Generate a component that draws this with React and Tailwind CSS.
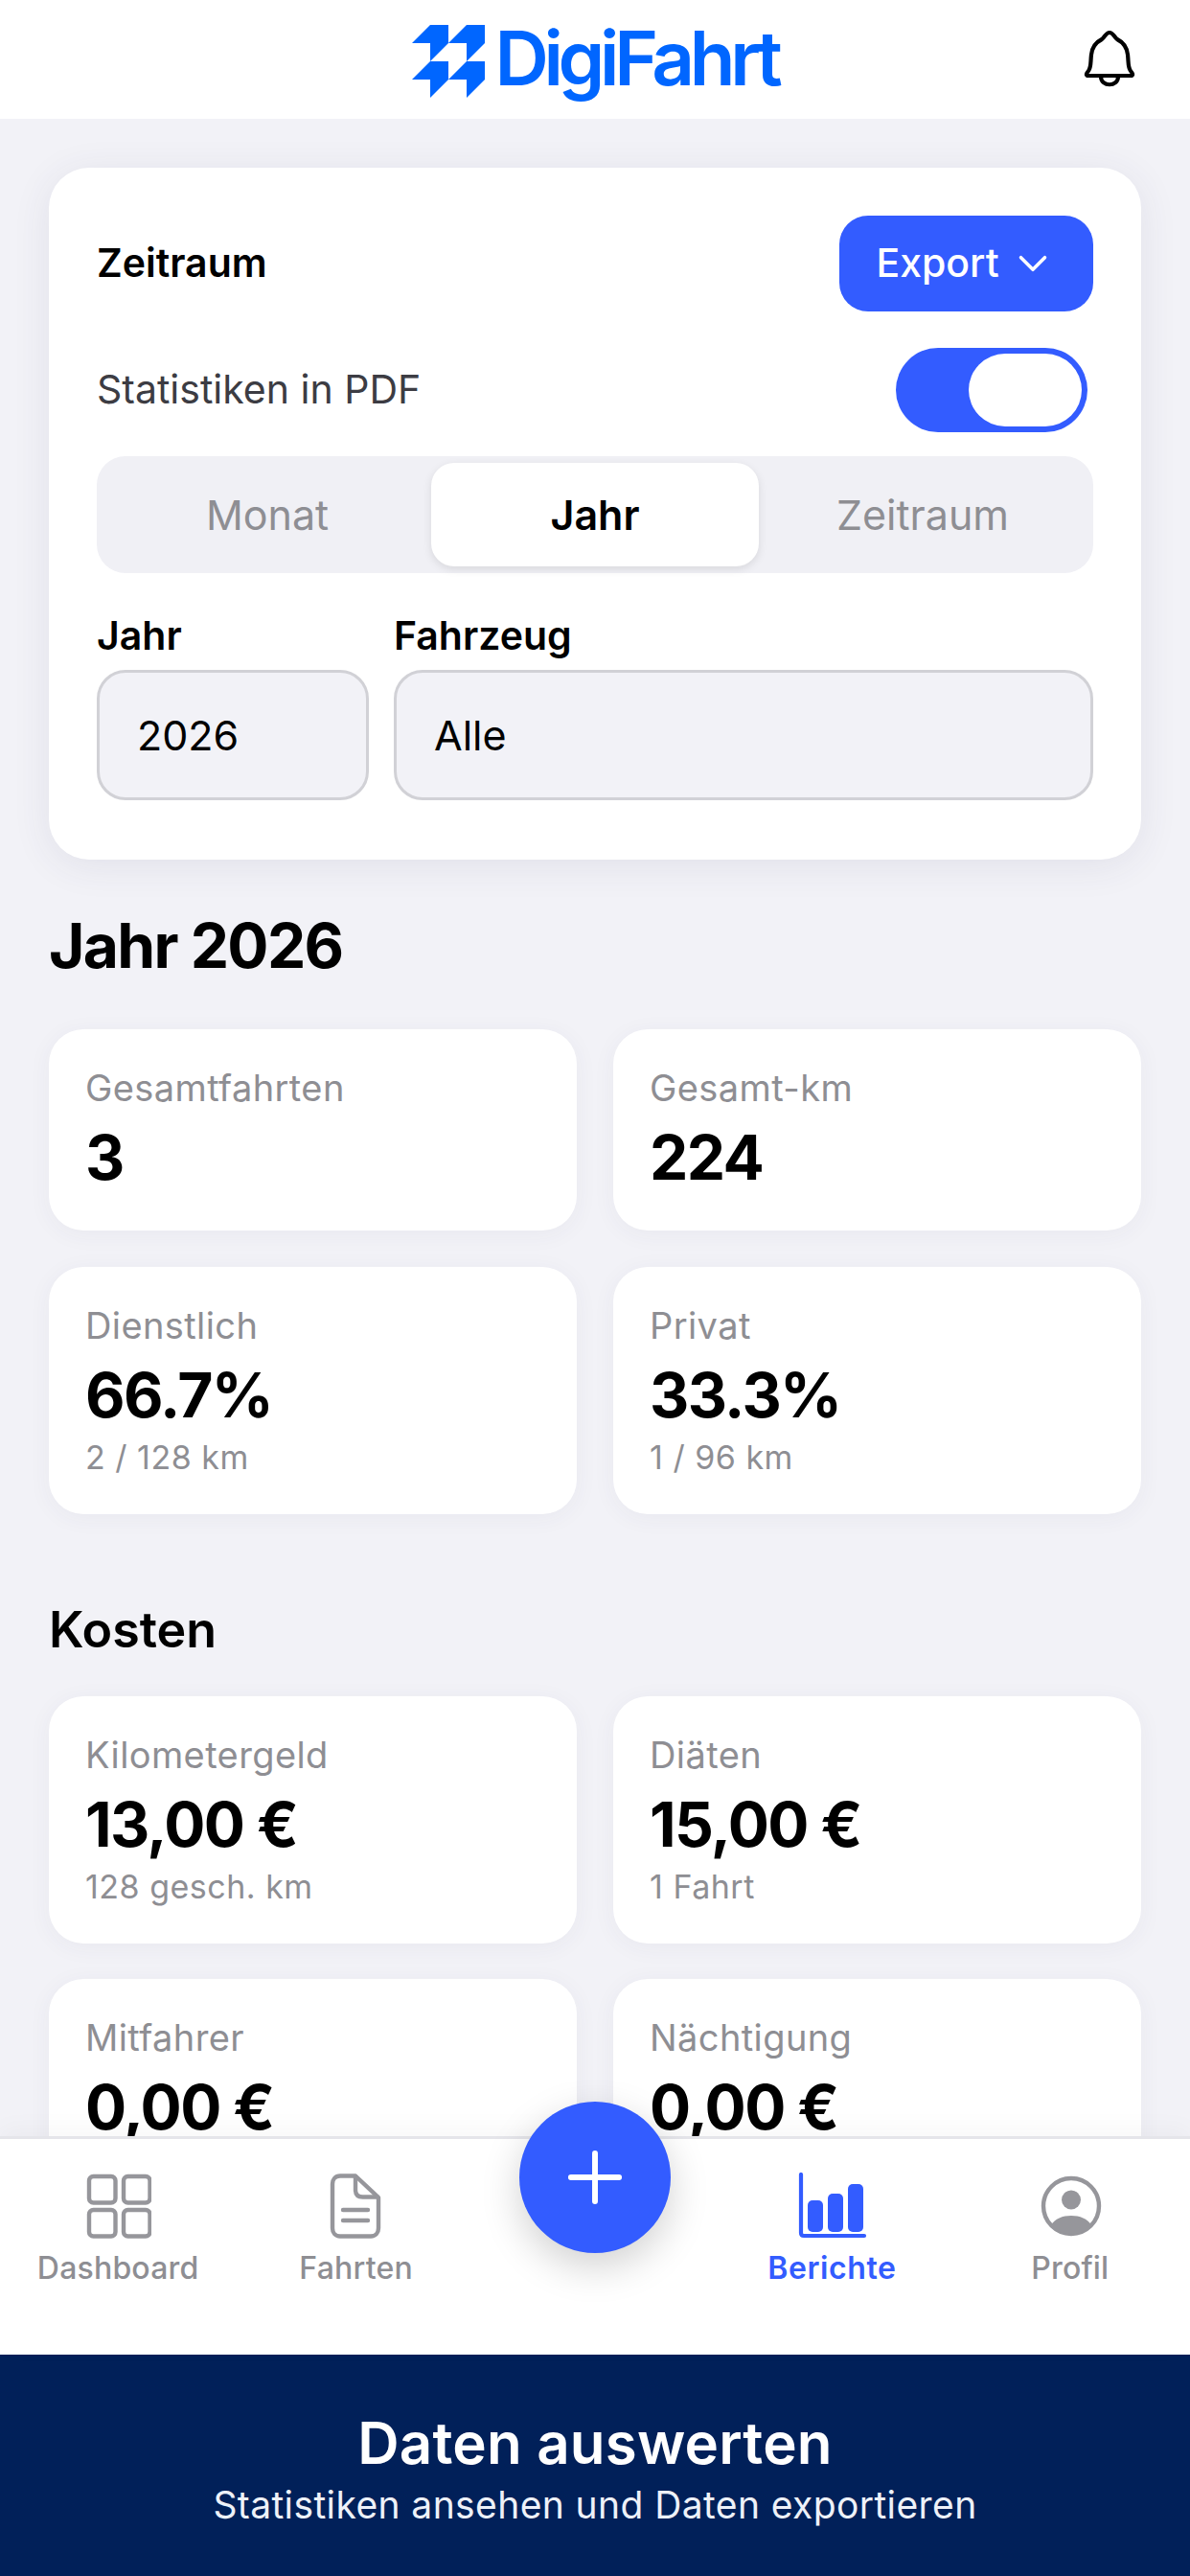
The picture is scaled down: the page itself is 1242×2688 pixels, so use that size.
import { ChevronDown, Plus } from "lucide-react";

function BellIcon() {
  return (
    <svg width="100" height="90" viewBox="0 0 100 90" fill="none" stroke="#000" strokeWidth="4.2" strokeLinejoin="round">
      <path d="M55 14C51 14 50 19 47 21C41 24 37 28 36 37C35 46 36 50 33 54C31 56.5 30 58 32 59H78C80 58 79 56.5 77 54C74 50 75 46 74 37C73 28 69 24 63 21C60 19 59 14 55 14Z" />
      <path d="M46 60C46 71 64 71 64 60" />
    </svg>
  );
}

function LogoMark() {
  return (
    <svg width="76" height="76" viewBox="0 0 76 76" fill="#0066ff">
      <path d="M0 19L19 0H38V19L19 38V19Z" />
      <path d="M38 19L57 0H76V19L57 38V19Z" />
      <path d="M0 57L19 38H38V57L19 76V57Z" />
      <path d="M38 57L57 38H76V57L57 76V57Z" />
    </svg>
  );
}

function DashboardIcon() {
  return (
    <svg width="68" height="68" viewBox="0 0 68 68" fill="none" stroke="#96969b" strokeWidth="4.4">
      <rect x="3" y="3" width="27.5" height="27.5" rx="4.5" />
      <rect x="39" y="3" width="27.5" height="27.5" rx="4.5" />
      <rect x="3" y="38" width="27.5" height="27.5" rx="4.5" />
      <rect x="39" y="38" width="27.5" height="27.5" rx="4.5" />
    </svg>
  );
}

function FileIcon() {
  return (
    <svg width="68" height="68" viewBox="0 0 68 68" fill="none" stroke="#96969b" strokeWidth="4.4" strokeLinecap="round" strokeLinejoin="round">
      <path d="M16 2.5H32L56 25V57C56 62 53 65.5 48 65.5H16C11 65.5 8 62 8 57V11C8 6 11 2.5 16 2.5Z" />
      <path d="M32 3V17C32 22 34.5 24.5 39.5 24.5H55" />
      <path d="M19 38H45" />
      <path d="M19 49H45" />
    </svg>
  );
}

function ChartIcon() {
  return (
    <svg width="72" height="70" viewBox="0 0 72 70" fill="#335cff">
      <path d="M3 2V63C3 65 4 66 6 66H69" fill="none" stroke="#335cff" strokeWidth="4.2" strokeLinecap="round" />
      <rect x="10" y="29" width="16" height="33" rx="5" />
      <rect x="31" y="22" width="16" height="40" rx="5" />
      <rect x="52" y="12" width="16" height="50" rx="5" />
    </svg>
  );
}

function ProfileIcon() {
  return (
    <svg width="68" height="68" viewBox="0 0 68 68" fill="#96969b">
      <circle cx="34" cy="34" r="29" fill="none" stroke="#96969b" strokeWidth="4.4" />
      <circle cx="34" cy="27.5" r="10" />
      <path d="M13 54C17 47 25 44 34 44C43 44 51 47 55 54C50 60 42 63 34 63C26 63 18 60 13 54Z" />
    </svg>
  );
}

function StatCard({ label, value, sub, tall }) {
  return (
    <div className={`bg-white rounded-[36px] px-[38px] pt-[38px] shadow-[0_4px_24px_rgba(60,60,100,0.05)] ${tall ? "h-[258px]" : "h-[210px]"}`}>
      <p className="text-[38px] leading-[46px] text-[#8e8e93] tracking-[0.4px]">{label}</p>
      <p className="text-[64px] leading-[76px] font-bold text-black mt-[12px] tracking-[-1.6px]">{value}</p>
      {sub && <p className="text-[34px] leading-[44px] text-[#8e8e93] mt-[5px] tracking-[0.5px]">{sub}</p>}
    </div>
  );
}

function NavItem({ icon, label, active }) {
  return (
    <div className="flex flex-col items-center">
      <div className="h-[70px] flex items-center justify-center">{icon}</div>
      <span className={`text-[32px] leading-[44px] mt-[8px] ${active ? "text-[#335cff] font-semibold tracking-[0.6px] -ml-[2px]" : "text-[#8e8e93] font-medium tracking-[0.2px] -ml-[2px]"}`}>
        {label}
      </span>
    </div>
  );
}

export default function App() {
  return (
    <div className="w-[1242px] h-[2688px] flex flex-col bg-[#f2f2f7] overflow-hidden font-[family-name:Inter,sans-serif]">
      <header className="h-[124px] shrink-0 bg-white grid grid-cols-[1fr_auto_1fr] items-center z-10">
        <div />
        <div className="flex items-start gap-[10px] pt-[4px]">
          <LogoMark />
          <span className="text-[78px] leading-[70px] font-semibold text-[#0066ff] tracking-[-5.3px]">DigiFahrt</span>
        </div>
        <div className="flex justify-end pr-[39px] pt-[6px]">
          <BellIcon />
        </div>
      </header>

      <main className="flex-1 min-h-0 overflow-hidden px-[51px] pt-[51px]">
        <section className="bg-white rounded-[42px] px-[50px] pt-[50px] pb-[62px] shadow-[0_6px_40px_rgba(60,60,100,0.09)]">
          <div className="flex items-center justify-between h-[100px]">
            <h2 className="text-[41px] font-semibold text-black">Zeitraum</h2>
            <button className="h-[100px] w-[265px] rounded-[30px] bg-[#335cff] text-white text-[41px] font-medium flex items-center justify-center gap-[10px]">
              Export
              <ChevronDown size={50} strokeWidth={1.7} />
            </button>
          </div>

          <div className="flex items-center justify-between mt-[38px] h-[88px]">
            <span className="text-[41px] text-[#3c3c43]">Statistiken in PDF</span>
            <div className="w-[200px] h-[88px] mr-[6px] rounded-full bg-[#335cff] p-[6px] flex justify-end">
              <div className="w-[118px] h-[76px] rounded-full bg-white" />
            </div>
          </div>

          <div className="mt-[25px] h-[122px] rounded-[30px] bg-[#f0f0f5] p-[7px] grid grid-cols-3 text-[43px]">
            <div className="flex items-center justify-center text-[#8e8e93]">Monat</div>
            <div className="flex items-center justify-center rounded-[24px] bg-white font-semibold text-black shadow-[0_3px_10px_rgba(0,0,0,0.1)]">Jahr</div>
            <div className="flex items-center justify-center text-[#8e8e93]">Zeitraum</div>
          </div>

          <div className="mt-[41px] grid grid-cols-[284px_1fr] gap-x-[26px]">
            <label className="text-[41px] leading-[48px] font-semibold text-black mb-[12px]">Jahr</label>
            <label className="text-[41px] leading-[48px] font-semibold text-black mb-[12px]">Fahrzeug</label>
            <div className="h-[136px] rounded-[30px] border-[3px] border-[#d1d1d6] bg-[#f2f2f7] px-[39px] flex items-center text-[43px] text-black">2026</div>
            <div className="h-[136px] rounded-[30px] border-[3px] border-[#d1d1d6] bg-[#f2f2f7] px-[39px] flex items-center text-[43px] text-black">Alle</div>
          </div>
        </section>

        <h2 className="mt-[50px] mb-[47px] h-[80px] leading-[80px] text-[64px] font-bold text-black tracking-[-1.6px]">Jahr 2026</h2>

        <div className="grid grid-cols-2 gap-x-[38px] gap-y-[38px]">
          <StatCard label="Gesamtfahrten" value="3" />
          <StatCard label="Gesamt-km" value="224" />
          <StatCard label="Dienstlich" value="66.7%" sub="2 / 128 km" tall />
          <StatCard label="Privat" value="33.3%" sub="1 / 96 km" tall />
        </div>

        <h2 className="mt-[86px] mb-[34px] h-[70px] leading-[70px] text-[52px] font-semibold text-black">Kosten</h2>

        <div className="grid grid-cols-2 gap-x-[38px] gap-y-[37px]">
          <StatCard label="Kilometergeld" value="13,00 €" sub="128 gesch. km" tall />
          <StatCard label="Diäten" value="15,00 €" sub="1 Fahrt" tall />
          <StatCard label="Mitfahrer" value="0,00 €" tall />
          <StatCard label="Nächtigung" value="0,00 €" tall />
        </div>
      </main>

      <nav className="relative shrink-0 h-[228px] bg-white border-t-[3px] border-[#e5e5ea] grid grid-cols-5 pt-[35px] shadow-[0_-8px_24px_rgba(0,0,0,0.03)]">
        <NavItem icon={<DashboardIcon />} label="Dashboard" />
        <NavItem icon={<FileIcon />} label="Fahrten" />
        <div />
        <NavItem icon={<ChartIcon />} label="Berichte" active />
        <NavItem icon={<ProfileIcon />} label="Profil" />
        <button className="absolute left-[542px] top-[-39px] w-[158px] h-[158px] rounded-full bg-[#335cff] text-white flex items-center justify-center shadow-[0_14px_40px_rgba(0,0,0,0.18)]">
          <Plus size={86} strokeWidth={1.67} />
        </button>
      </nav>

      <footer className="shrink-0 h-[231px] bg-[#012059] flex flex-col items-center pt-[51px]">
        <h1 className="text-[60px] leading-[82px] font-semibold text-white tracking-[0.2px]">Daten auswerten</h1>
        <p className="text-[39px] leading-[48px] text-[#eef1f8] tracking-[0.4px]">Statistiken ansehen und Daten exportieren</p>
      </footer>
    </div>
  );
}
